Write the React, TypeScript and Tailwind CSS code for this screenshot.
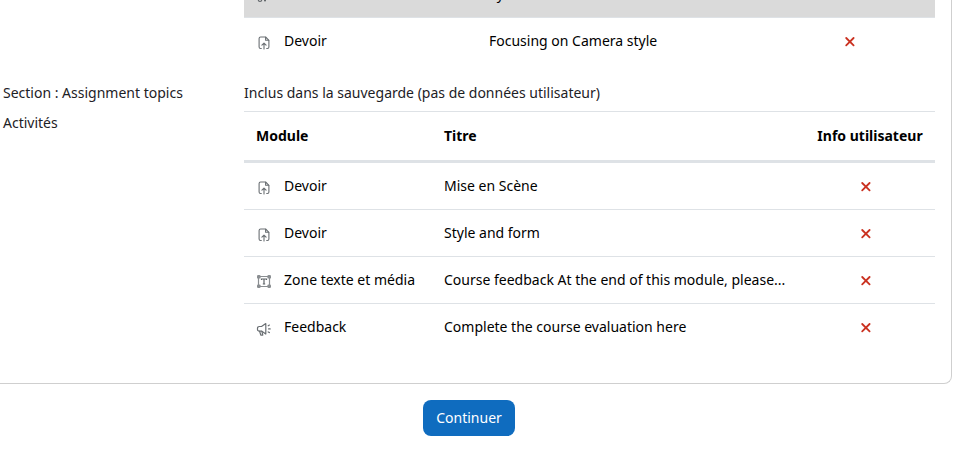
type Kind = "quiz" | "assign" | "label" | "feedback";

interface Activity {
  kind: Kind;
  module: string;
  title: string;
}

const previousActivities: Activity[] = [
  { kind: "quiz", module: "Test", title: "Symbolism" },
  { kind: "assign", module: "Devoir", title: "Focusing on Camera style" },
];

const activities: Activity[] = [
  { kind: "assign", module: "Devoir", title: "Mise en Scène" },
  { kind: "assign", module: "Devoir", title: "Style and form" },
  { kind: "label", module: "Zone texte et média", title: "Course feedback At the end of this module, please..." },
  { kind: "feedback", module: "Feedback", title: "Complete the course evaluation here" },
];

function QuizIcon() {
  return (
    <svg width="16" height="16" viewBox="0 0 16 16" fill="none" stroke="#5f6468" strokeWidth="1.1" strokeLinecap="round">
      <circle cx="4" cy="4" r="1.8" />
      <circle cx="4" cy="11.6" r="1.8" />
      <path d="M9 2v4" />
      <path strokeWidth="2" d="M9 10v2.6" />
    </svg>
  );
}

function AssignIcon() {
  return (
    <svg width="16" height="16" viewBox="0 0 16 16" fill="none" stroke="#6a6f73" strokeWidth="1.1" strokeLinecap="round" strokeLinejoin="round">
      <path d="M5.3 13.5H4.6A1.5 1.5 0 0 1 3.1 12V3.5A1.5 1.5 0 0 1 4.6 2h5l3.3 3.3V12a1.5 1.5 0 0 1-1.5 1.5h-.7" />
      <path d="M9.6 2.2v3.1h3.1" />
      <path d="M8 13.9V8.3M5.9 10.2 8 8.1l2.1 2.1" />
    </svg>
  );
}

function LabelIcon() {
  return (
    <svg width="16" height="16" viewBox="0 0 16 16" fill="none" stroke="#8a8e91" strokeWidth="1.2">
      <path d="M4 2.5h8M4 12.5h8M2.5 4v7M13.5 4v7" />
      <g fill="#8a8e91" stroke="none">
        <rect x="1" y="1" width="3.6" height="3.6" rx="1.2" />
        <rect x="11.4" y="1" width="3.6" height="3.6" rx="1.2" />
        <rect x="1" y="10.4" width="3.6" height="3.6" rx="1.2" />
        <rect x="11.4" y="10.4" width="3.6" height="3.6" rx="1.2" />
      </g>
      <path stroke="#5f6468" d="M5.5 6V5h5v1M8 5v5M6.8 10h2.4" />
    </svg>
  );
}

function FeedbackIcon() {
  return (
    <svg width="16" height="16" viewBox="0 0 16 16" fill="none" stroke="#6a6f73" strokeWidth="1.2" strokeLinecap="round" strokeLinejoin="round">
      <path d="M5.5 5.5H3.2A1.7 1.7 0 0 0 1.5 7.2v1.2a1.7 1.7 0 0 0 1.7 1.7h2.3L9.8 13V2.6z" />
      <path d="M3.6 10.2l1.2 3.9h2l-.9-3.8" />
      <path d="M12.2 4.8l1.2-.7M12.6 7.9h1.6M12.2 10.9l1.2.7" />
    </svg>
  );
}

const icons = { quiz: QuizIcon, assign: AssignIcon, label: LabelIcon, feedback: FeedbackIcon };

function CrossIcon() {
  return (
    <svg role="img" aria-label="Non" width="12" height="12" viewBox="0 0 12 12" className="mr-2 inline-block" stroke="#ca3120" strokeWidth="1.8" strokeLinecap="round">
      <path d="M2.2 2l7.4 7.4M9.6 2L2.2 9.4" />
    </svg>
  );
}

function ActivityRow({ item, shaded }: { item: Activity; shaded?: boolean }) {
  const Icon = icons[item.kind];
  return (
    <tr className={shaded ? "border-b border-[#dee2e6] bg-[#dadada]" : "border-b border-[#dee2e6] last:border-b-0"}>
      <td className="p-3">
        <div className="flex items-center gap-3">
          <span className="pt-1"><Icon /></span>
          <span className="whitespace-nowrap">{item.module}</span>
        </div>
      </td>
      <td className="p-3">{item.title}</td>
      <td className="p-3 text-center"><CrossIcon /></td>
    </tr>
  );
}

export default function App() {
  return (
    <div className="overflow-hidden bg-white pb-6 font-['Noto_Sans','Open_Sans',sans-serif] text-[14px] leading-[22px] text-[#1d2125]">
      <div className="mr-5 rounded-br-lg border-r border-b border-[#cfcfcf] pr-4 pb-[33px]">
        <div className="pl-[244px]">
          <table className="-mt-[29px] w-full table-fixed border-collapse text-black">
            <colgroup>
              <col className="w-[233px]" />
              <col />
              <col className="w-[162px]" />
            </colgroup>
            <tbody>
              {previousActivities.map((item, i) => (
                <ActivityRow key={item.title} item={item} shaded={i === 0} />
              ))}
            </tbody>
          </table>
        </div>

        <dl className="grid grid-cols-[241px_1fr] pt-[14px] pl-[3px] leading-[30px]">
          <dt>Section : Assignment topics</dt>
          <dd>Inclus dans la sauvegarde (pas de données utilisateur)</dd>
          <dt>Activités</dt>
          <dd className="pt-[3px] leading-[22px]">
            <table className="w-full table-fixed border-collapse text-black">
              <colgroup>
                <col className="w-[188px]" />
                <col />
                <col className="w-[130px]" />
              </colgroup>
              <thead>
                <tr className="border-t border-b-3 border-[#dee2e6] text-left leading-[24px]">
                  <th className="p-3 font-bold">Module</th>
                  <th className="p-3 font-bold">Titre</th>
                  <th className="p-3 text-center font-bold whitespace-nowrap">Info utilisateur</th>
                </tr>
              </thead>
              <tbody>
                {activities.map((item) => (
                  <ActivityRow key={item.title} item={item} />
                ))}
              </tbody>
            </table>
          </dd>
        </dl>
      </div>

      <div className="mr-[34px] flex justify-center pt-4">
        <button type="button" className="h-9 rounded-lg bg-[#0f6cbf] px-[13px] text-white hover:bg-[#0c589c]">
          Continuer
        </button>
      </div>
    </div>
  );
}
